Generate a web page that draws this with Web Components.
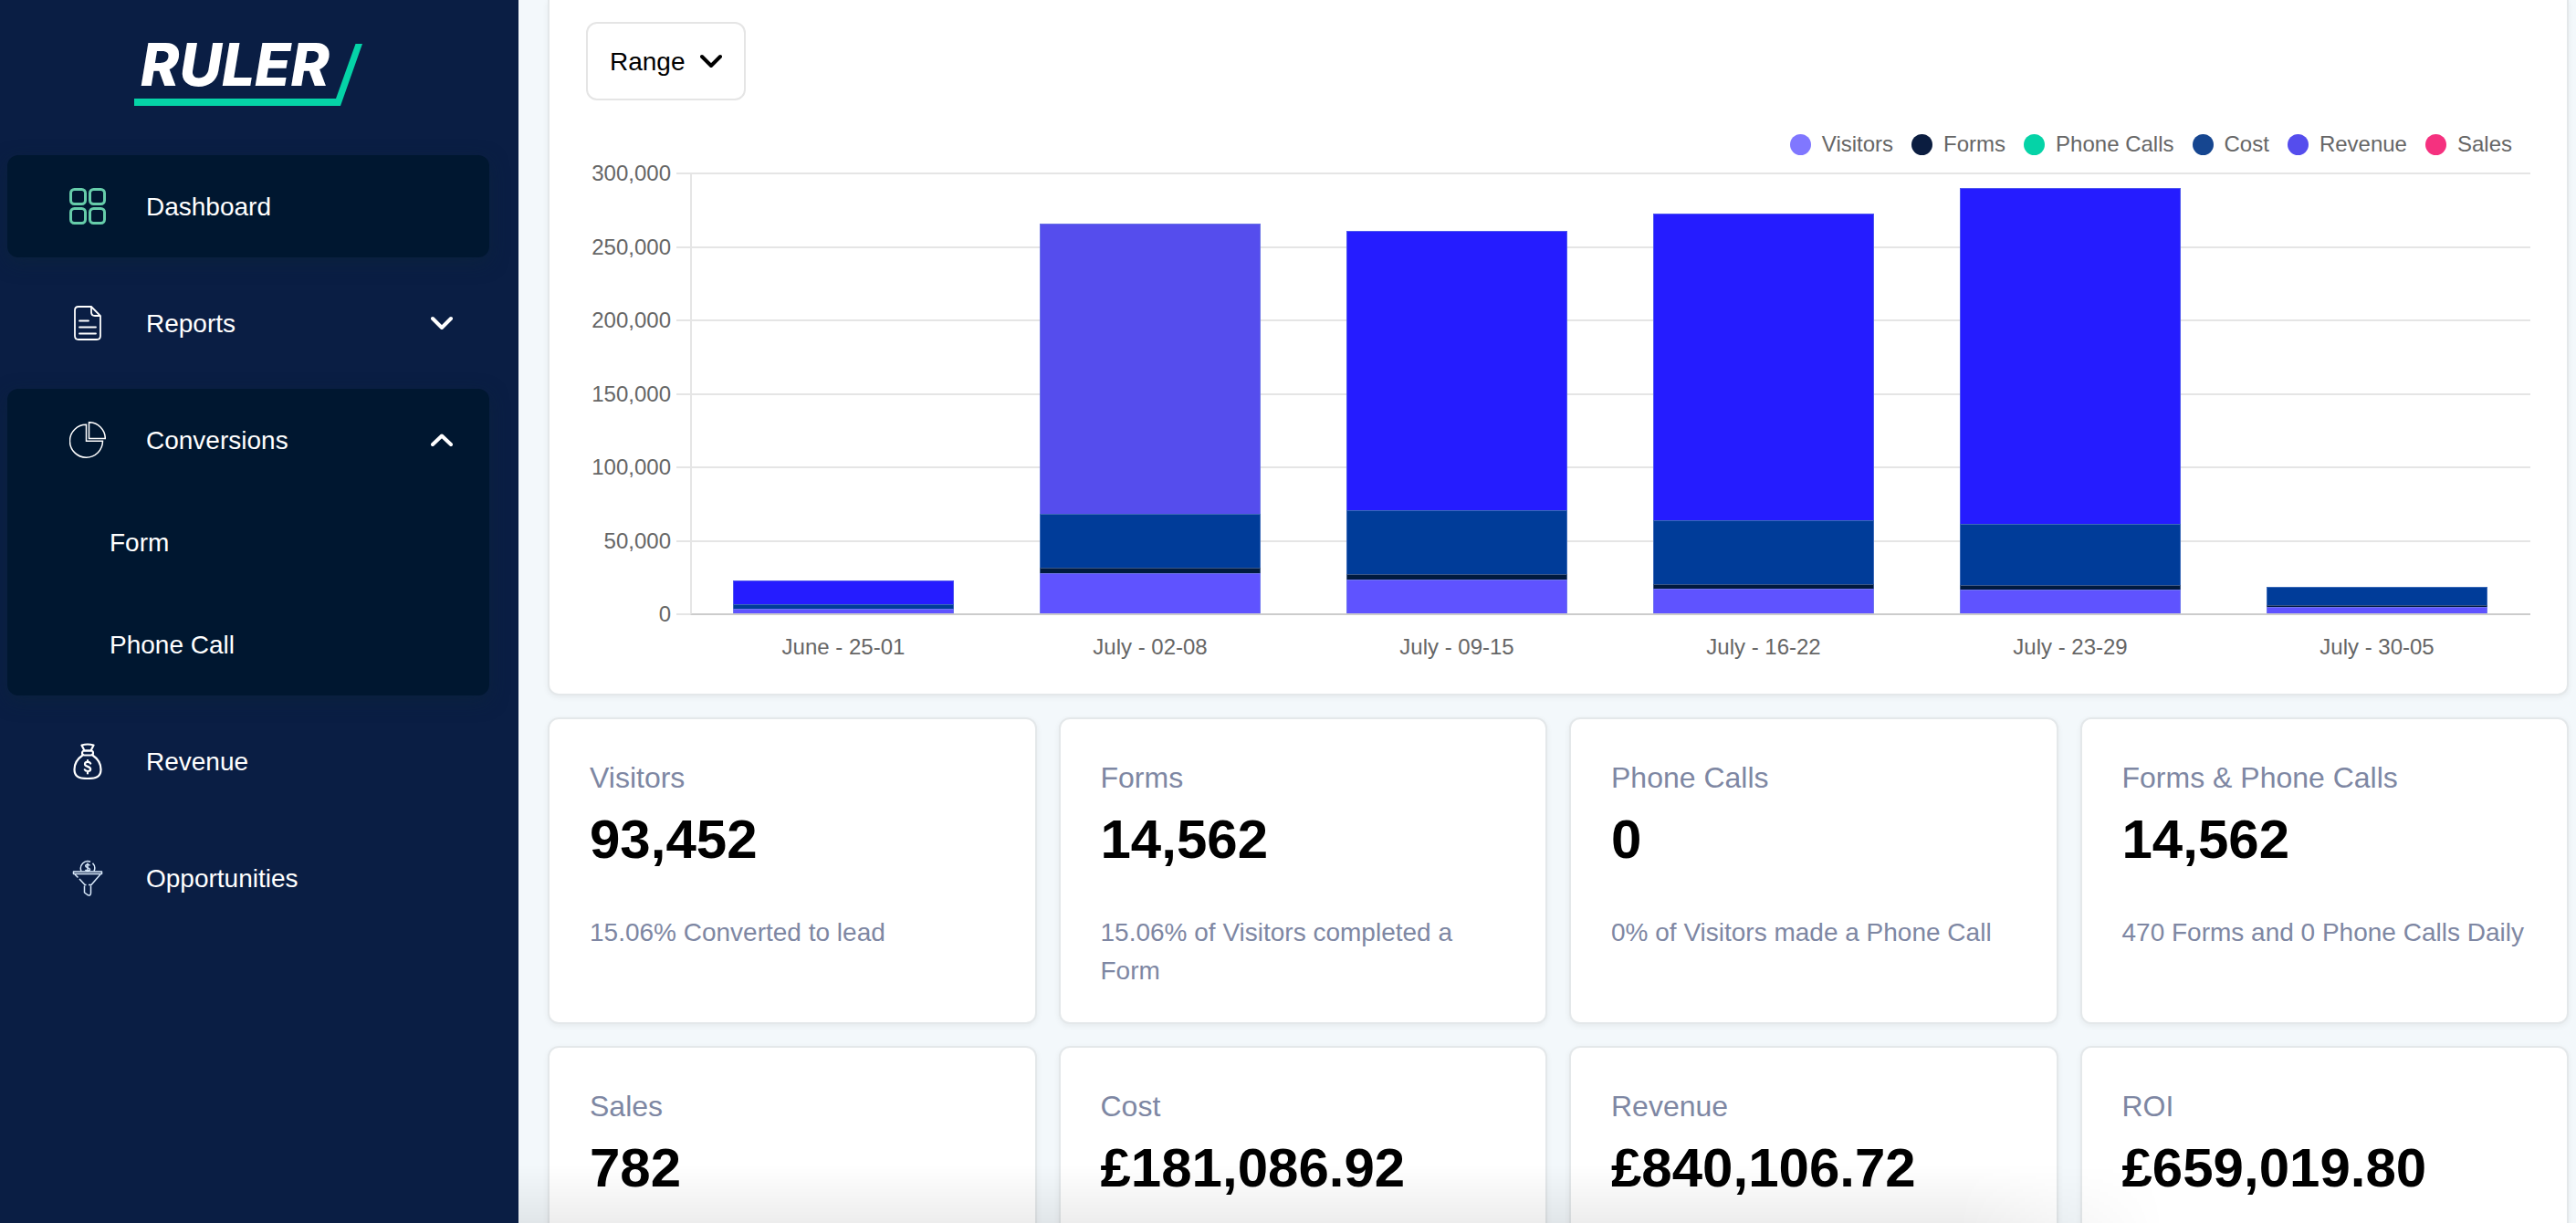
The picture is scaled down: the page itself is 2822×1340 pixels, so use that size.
<!DOCTYPE html>
<html lang="en">
<head>
<meta charset="utf-8">
<title>Ruler - Dashboard</title>
<style>
  html, body { margin: 0; height: 100%; }
  body { font-family: "Liberation Sans", Arial, sans-serif; font-size: 28px; color: #000; background: #f3f8fb; overflow: hidden; }
</style>
</head>
<body>
<ruler-app>
  <ruler-sidebar slot="sidebar">
    <nav-item icon="dashboard" active>Dashboard</nav-item>
    <nav-item icon="reports" chevron="down">Reports</nav-item>
    <nav-item icon="conversions" chevron="up" active>Conversions
      <sub-item slot="children">Form</sub-item>
      <sub-item slot="children">Phone Call</sub-item>
    </nav-item>
    <nav-item icon="revenue">Revenue</nav-item>
    <nav-item icon="opportunities">Opportunities</nav-item>
  </ruler-sidebar>
  <chart-card>
    <range-select></range-select>
    <chart-legend></chart-legend>
    <stacked-chart></stacked-chart>
  </chart-card>
  <stat-grid>
    <stat-card label="Visitors" value="93,452">15.06% Converted to lead</stat-card>
    <stat-card label="Forms" value="14,562">15.06% of Visitors completed a Form</stat-card>
    <stat-card label="Phone Calls" value="0">0% of Visitors made a Phone Call</stat-card>
    <stat-card label="Forms &amp; Phone Calls" value="14,562">470 Forms and 0 Phone Calls Daily</stat-card>
    <stat-card label="Sales" value="782"></stat-card>
    <stat-card label="Cost" value="£181,086.92"></stat-card>
    <stat-card label="Revenue" value="£840,106.72"></stat-card>
    <stat-card label="ROI" value="£659,019.80"></stat-card>
  </stat-grid>
</ruler-app>

<script>
const define = (name, render) => customElements.define(name, class extends HTMLElement {
  connectedCallback() {
    if (!this.shadowRoot) this.attachShadow({ mode: 'open' }).innerHTML = render(this);
  }
});

const chevron = dir => `<svg class="chev" width="24" height="16" viewBox="0 0 24 16" fill="none" stroke="currentColor" stroke-width="4" stroke-linecap="round" stroke-linejoin="round" aria-hidden="true"><path d="${dir === 'up' ? 'M2 13 12 3.500 22 13' : 'M2 3 12 13 22 3'}"/></svg>`;

const icons = {
  dashboard: `<g stroke="#66cdaa" stroke-width="3"><rect x="1.500" y="1.500" width="16" height="16" rx="4"/><rect x="22.500" y="1.500" width="16" height="16" rx="4"/><rect x="1.500" y="22.500" width="16" height="16" rx="4"/><rect x="22.500" y="22.500" width="16" height="16" rx="4"/></g>`,
  reports: `<g stroke-width="1.800"><path d="M24 2H10Q6 2 6 6V34Q6 38 10 38H30Q34 38 34 34V12Z"/><path d="M24 2V8Q24 12 28 12H34"/><path d="M11 17.500H21M11 24.500H29M11 31.500H29" stroke-linecap="round"/></g>`,
  conversions: `<g stroke-width="1.500"><path d="M18.500 3.200A18 18 0 1 0 36.500 21.300H18.500Z"/><path d="M21.500 .7V18.500H39.300A17.800 17.800 0 0 0 21.500 .7Z"/></g>`,
  revenue: `<g stroke-width="2.200" stroke-linejoin="round" stroke-linecap="round"><path d="M13.500 2.500Q20 .5 26.500 2.500L23.500 8.500H16.500Z"/><rect x="14" y="8.500" width="12" height="5" rx="2.500"/><path d="M14.500 13.500C8 18 5.500 23 5.500 29C5.500 36 9 39 20 39S34.500 36 34.500 29C34.500 23 32 18 25.500 13.500"/><path d="M23.200 22.500C22 20.300 17 20.300 17 23.200C17 26.500 23.200 25.300 23.200 28.800C23.200 31.600 18 31.700 16.800 29.300M20 19V21M20 31V33.500"/></g>`,
  opportunities: `<g stroke-width="1.500" stroke="#d9e9fa" stroke-linejoin="round"><path d="M13 12.500A7.800 7.800 0 0 1 23 2.200M25.500 3.800A7.800 7.800 0 0 1 27 12.500"/><path d="M22.500 6.300C21.500 4.700 17.700 4.700 17.700 6.800C17.700 9 22.500 8.200 22.500 10.600C22.500 12.600 18.500 12.600 17.400 11M20 3.500V13"/><path d="M4.500 13H35.500V15.500H4.500Z"/><path d="M6 16 9.500 19.500M11 21 17 27.500H18.500M34 16 24 27.500H21M16.500 28.500V36L20.500 38.800Q23.500 39.500 23.500 36.500V28.500"/></g>`
};

define('ruler-app', () => `
  <style>
    :host { display: flex; height: 100vh; overflow: hidden; }
    main { flex: 1; min-width: 0; position: relative; display: flex; flex-direction: column; gap: 24px; padding: 0 8px 0 32px; overflow: hidden; }
    .fade { position: absolute; left: 0; right: 0; bottom: 0; height: 64px; pointer-events: none;
      background: linear-gradient(rgba(0,0,0,0), rgba(0,0,0,.07));
      -webkit-mask-image: linear-gradient(90deg, #000 70%, transparent 80%); mask-image: linear-gradient(90deg, #000 70%, transparent 80%); }
  </style>
  <slot name="sidebar"></slot>
  <main><slot></slot><div class="fade"></div></main>`);

define('ruler-sidebar', () => `
  <style>
    :host { display: flex; flex-direction: column; flex: none; width: 568px; box-sizing: border-box; background: #0a1e44; padding: 22px 32px 0 8px; color: #fff; }
    header { display: flex; justify-content: center; margin-bottom: 48px; }
    nav { display: flex; flex-direction: column; gap: 16px; }
    svg { display: block; }
    text { font: italic 800 64px Inter, sans-serif; }
  </style>
  <header><svg width="252" height="100" viewBox="0 0 252 100" role="img" aria-label="Ruler">
    <text x="8" y="72" fill="#fff">RULER</text>
    <path d="M1 86H222L243.500 26H251L227 94H1Z" fill="#05d3a7"/>
  </svg></header>
  <nav><slot></slot></nav>`);

define('nav-item', el => {
  const c = el.getAttribute('chevron');
  const tag = c ? 'button' : 'a';
  return `
  <style>
    :host { display: block; border-radius: 12px; }
    :host([active]) { background: #001730; box-shadow: 0 6px 20px rgba(12,38,56,.5); }
    .row { all: unset; box-sizing: border-box; cursor: pointer; display: flex; align-items: center; gap: 44px; width: 100%; height: 112px; padding: 0 40px 0 68px; font: inherit; color: #fff; }
    .icon { flex: none; fill: none; stroke: #fff; }
    .label { flex: 1; padding-top: 2px; }
    .chev { flex: none; }
  </style>
  <${tag} class="row" ${c ? `type="button" aria-expanded="${c === 'up'}"` : 'href="#"'}>
    <svg class="icon" width="40" height="40" viewBox="0 0 40 40" aria-hidden="true">${icons[el.getAttribute('icon')]}</svg>
    <span class="label"><slot></slot></span>${c ? chevron(c) : ''}
  </${tag}>
  <slot name="children"></slot>`;
});

define('sub-item', () => `
  <style>
    :host { display: block; }
    a { display: flex; align-items: center; box-sizing: border-box; height: 112px; padding: 2px 0 0 112px; color: #fff; text-decoration: none; }
  </style>
  <a href="#"><slot></slot></a>`);

define('chart-card', () => `
  <style>
    :host { display: flex; flex-direction: column; flex: none; background: #fff; border: 2px solid #e4e8ea; border-top: 0; border-radius: 0 0 12px 12px; padding: 24px 40px 37px; box-shadow: 0 2px 6px rgba(0,0,0,.06); }
  </style>
  <slot></slot>`);

define('range-select', () => `
  <style>
    :host { display: grid; width: max-content; align-items: center; }
    select, .chev { grid-area: 1 / 1; }
    select { appearance: none; height: 86px; box-sizing: border-box; margin: 0; padding: 0 64px 0 24px; border: 2px solid #e5e5e5; border-radius: 12px; background: #fff; color: #000; font: inherit; }
    .chev { justify-self: end; margin-right: 26px; pointer-events: none; }
  </style>
  <select aria-label="Range"><option>Range</option></select>${chevron('down')}`);

define('chart-legend', () => `
  <style>
    :host { display: flex; justify-content: flex-end; gap: 20px; margin: 34px 20px 17px 0; font-size: 24px; line-height: 28px; color: #666; }
    span { display: flex; align-items: center; gap: 12px; }
    i { width: 23px; height: 23px; border-radius: 50%; }
  </style>
  ${[['Visitors', '#8077ff'], ['Forms', '#0b1d40'], ['Phone Calls', '#05d3a7'], ['Cost', '#164690'], ['Revenue', '#554ded'], ['Sales', '#f5317f']]
    .map(([t, c]) => `<span><i style="background:${c}"></i>${t}</span>`).join('')}`);

// Each row: week, visitors, forms, cost, revenue (stacked bottom to top)
const weeks = [
  ['June - 25-01', 3600, 0, 3200, 16200],
  ['July - 02-08', 28000, 3600, 36600, 197500],
  ['July - 09-15', 23600, 3700, 43500, 190000],
  ['July - 16-22', 17400, 3100, 43500, 208500],
  ['July - 23-29', 16800, 2900, 42000, 228200],
  ['July - 30-05', 5000, 1200, 12600, 0]
];
const MAX = 300000;

define('stacked-chart', () => {
  const seg = (v, c) => v ? `<div style="height:${v / MAX * 100}%;background:${c}"></div>` : '';
  return `
  <style>
    :host { display: grid; grid-template-columns: 93px 6px 15px 1fr; grid-template-rows: 485px auto; row-gap: 21px; font-size: 24px; line-height: 28px; color: #666; }
    .y { grid-area: 1 / 1; display: flex; flex-direction: column; justify-content: space-between; text-align: right; margin: -13px 0; }
    .grid { grid-area: 1 / 3 / 2 / 5; display: flex; flex-direction: column; justify-content: space-between; }
    .grid div { height: 2px; background: #e5e5e5; }
    .axis { grid-area: 1 / 4; border-left: 2px solid #e5e5e5; border-bottom: 2px solid #ccc; }
    .bars { grid-area: 1 / 4; display: flex; margin: 1px 0; }
    .slot { flex: 1; display: flex; justify-content: center; }
    .bar { width: 72%; display: flex; flex-direction: column-reverse; }
    .bar div { box-sizing: border-box; border: 1px solid rgba(130,160,220,.45); border-bottom: 0; }
    .x { grid-area: 2 / 4; display: flex; text-align: center; }
    .x span { flex: 1; }
  </style>
  <div class="y">${[300, 250, 200, 150, 100, 50, 0].map(n => `<span>${n ? n + ',000' : 0}</span>`).join('')}</div>
  <div class="grid">${'<div></div>'.repeat(7)}</div>
  <div class="bars">${weeks.map(([, v, f, c, r], i) => `<div class="slot"><div class="bar">${seg(v, '#5f53ff')}${seg(f, '#001a3f')}${seg(c, '#003c99')}${seg(r, i === 1 ? '#554ded' : '#251cff')}</div></div>`).join('')}</div>
  <div class="axis"></div>
  <div class="x">${weeks.map(w => `<span>${w[0]}</span>`).join('')}</div>`;
});

define('stat-grid', () => `
  <style>
    :host { display: grid; grid-template-columns: repeat(4, minmax(0, 1fr)); grid-auto-rows: 1fr; gap: 24px; flex: none; }
  </style>
  <slot></slot>`);

define('stat-card', el => `
  <style>
    :host { display: block; background: #fff; border: 2px solid #e4e8ea; border-radius: 12px; padding: 40px 40px 35px 44px; box-shadow: 0 2px 6px rgba(0,0,0,.06); }
    h2, p { margin: 0; font-weight: 400; color: #7e87a3; }
    h2 { font-size: 32px; line-height: 48px; }
    strong { display: block; font-size: 60px; line-height: 88px; }
    p { margin-top: 37px; font-size: 28px; line-height: 42px; }
  </style>
  <h2>${el.getAttribute('label').replace('&', '&amp;')}</h2>
  <strong>${el.getAttribute('value')}</strong>
  <p><slot></slot></p>`);
</script>
</body>
</html>
